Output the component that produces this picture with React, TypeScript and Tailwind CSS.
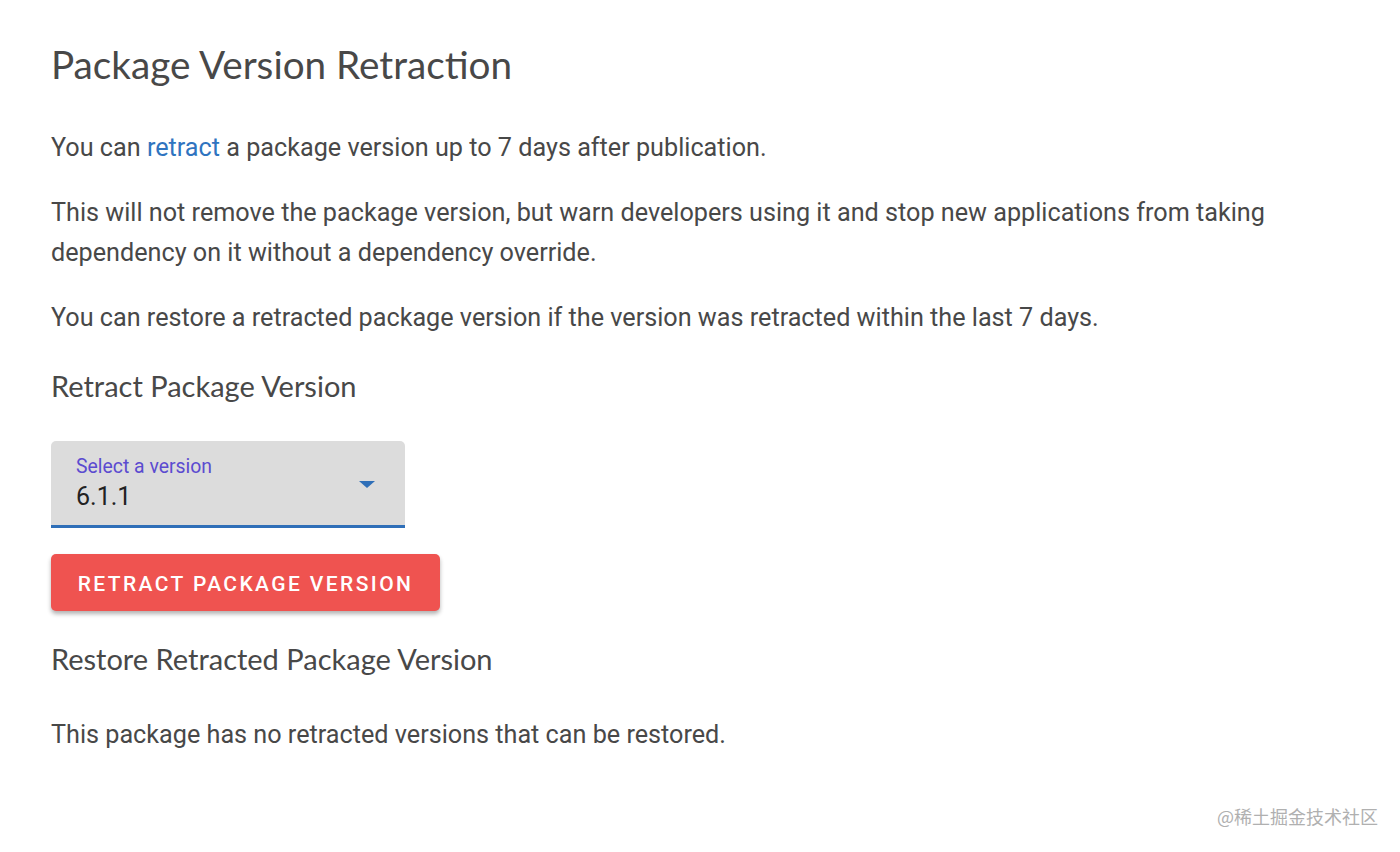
const App = () => {
  return (
    <div className="relative min-h-[852px] bg-white text-[#484848] font-['Roboto','Liberation_Sans',sans-serif]">
      <div className="px-[51px] pt-[40px]">
        <h1 className="text-[38.7px] leading-[48px] font-normal font-['Lato','Roboto',sans-serif]">
          Package Version Retraction
        </h1>

        <p className="mt-[40px] text-[25.2px] leading-[40px]">
          You can <a className="text-[#2f74c0]">retract</a> a package version up to 7 days after publication.
        </p>
        <p className="mt-[25px] text-[25.2px] leading-[40px] max-w-[1270px]">
          This will not remove the package version, but warn developers using it and stop new applications from taking
          dependency on it without a dependency override.
        </p>
        <p className="mt-[25px] text-[25.2px] leading-[40px]">
          You can restore a retracted package version if the version was retracted within the last 7 days.
        </p>

        <h2 className="mt-[28px] text-[29px] leading-[40px] font-['Lato','Roboto',sans-serif]">
          Retract Package Version
        </h2>

        <div className="mt-[35px] w-[354px] h-[87px] rounded-t-[5px] bg-[#dcdcdc] border-b-[3px] border-[#2f6fb8] flex items-center justify-between pl-[25px] pr-[30px]">
          <div className="flex flex-col pt-[3px]">
            <span className="text-[19.4px] leading-[22px] text-[#5b4bd0]">Select a version</span>
            <span className="mt-[3px] text-[25px] leading-[32px] text-[#222]">6.1.1</span>
          </div>
          <svg width="16" height="8" viewBox="0 0 16 8" className="mt-[4px]">
            <polygon points="0,0 16,0 8,7" fill="#2f6fb8" />
          </svg>
        </div>

        <button className="mt-[26px] w-[389px] h-[57px] pt-[4px] rounded-[5px] bg-[#ef5350] text-white text-[21px] font-medium tracking-[2.4px] shadow-[0_3px_4px_rgba(0,0,0,0.3)]">
          RETRACT PACKAGE VERSION
        </button>

        <h2 className="mt-[28px] text-[29px] leading-[40px] font-['Lato','Roboto',sans-serif]">
          Restore Retracted Package Version
        </h2>

        <p className="mt-[36px] text-[25.2px] leading-[40px]">
          This package has no retracted versions that can be restored.
        </p>
      </div>

      <div className="absolute right-[22px] bottom-[22px] text-[18px] text-[#b0b0b0] font-['Noto_Sans_CJK_SC',sans-serif]">
        @稀土掘金技术社区
      </div>
    </div>
  );
};

export default App;
